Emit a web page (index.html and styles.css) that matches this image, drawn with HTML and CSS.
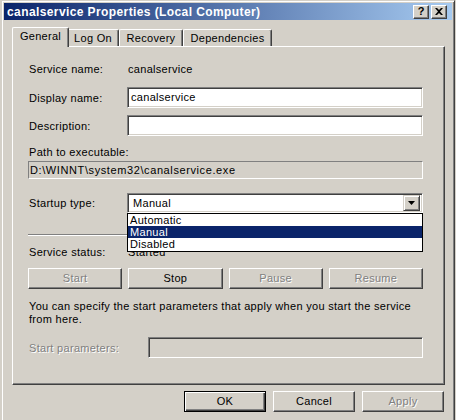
FILE: index.html
```html
<!DOCTYPE html>
<html>
<head>
<meta charset="utf-8">
<link rel="stylesheet" href="styles.css">
</head>
<body>
<div class="window">
  <div class="titlebar">
    <span class="title">canalservice Properties (Local Computer)</span>
    <span class="tbtn help">?</span>
    <span class="tbtn close"><svg width="8" height="7" viewBox="0 0 8 7"><path d="M0 0h2l2 2 2-2h2v0L5 3.5 8 7H6L4 5 2 7H0l3-3.5z" fill="#000"/></svg></span>
  </div>
  <div class="client">
    <div class="tabs">
      <div class="tab active t-general">General</div>
      <div class="tab t-logon">Log On</div>
      <div class="tab t-recovery">Recovery</div>
      <div class="tab t-deps">Dependencies</div>
    </div>
    <div class="panel">
      <div class="row r-name"><span class="label">Service name:</span><span class="value">canalservice</span></div>
      <div class="row r-display"><span class="label">Display name:</span><div class="edit">canalservice</div></div>
      <div class="row r-desc"><span class="label">Description:</span><div class="edit"></div></div>
      <div class="path-label">Path to executable:</div>
      <div class="path">D:\WINNT\system32\canalservice.exe</div>
      <div class="row r-startup"><span class="label">Startup type:</span>
        <div class="combo">
          <span class="combo-text">Manual</span>
          <span class="combo-btn"><svg width="7" height="4" viewBox="0 0 7 4"><path d="M0 0h7L3.5 4z" fill="#000"/></svg></span>
          <ul class="droplist">
            <li>Automatic</li>
            <li class="sel">Manual</li>
            <li>Disabled</li>
          </ul>
        </div>
      </div>
      <div class="sep"></div>
      <div class="row r-status"><span class="label">Service status:</span><span class="value">Started</span></div>
      <div class="svc-buttons">
        <button class="btn disabled">Start</button>
        <button class="btn">Stop</button>
        <button class="btn disabled">Pause</button>
        <button class="btn disabled">Resume</button>
      </div>
      <p class="hint">You can specify the start parameters that apply when you start the service<br>from here.</p>
      <div class="row r-params"><span class="label params-label disabled">Start parameters:</span><div class="edit edit-disabled"></div></div>
    </div>
    <div class="footer">
      <button class="btn default">OK</button>
      <button class="btn">Cancel</button>
      <button class="btn disabled">Apply</button>
    </div>
  </div>
</div>
</body>
</html>
```

FILE: styles.css
```css
* { box-sizing: border-box; }
html, body {
  margin: 0;
  padding: 0;
  width: 456px;
  height: 420px;
  overflow: hidden;
  background: #d4d0c8;
  font-family: "Liberation Sans", Arial, sans-serif;
  font-size: 11px;
  letter-spacing: 0.3px;
  color: #000;
}
.window {
  margin-left: 1px;
  width: 454px;
  height: 440px;
  border: 1px solid;
  border-color: #d4d0c8 #404040 #404040 #d4d0c8;
  box-shadow: inset 1px 1px #fff, inset -1px -1px #808080;
  padding: 2px;
  background: #d4d0c8;
}
.titlebar {
  height: 17px;
  background: linear-gradient(to right, #0a246a, #a6caf0);
  display: flex;
  align-items: center;
  padding: 0 5px 0 3px;
  gap: 2px;
}
.title {
  flex: 1;
  color: #fff;
  font-weight: bold;
  font-size: 12px;
  white-space: nowrap;
  letter-spacing: 0.4px;
}
.tbtn {
  width: 16px;
  height: 14px;
  background: #d4d0c8;
  border: 1px solid;
  border-color: #fff #404040 #404040 #fff;
  box-shadow: inset -1px -1px #808080;
  display: flex;
  align-items: center;
  justify-content: center;
  font-weight: bold;
  font-size: 11px;
  line-height: 1;
  letter-spacing: 0;
}
.tbtn svg { display: block; }
.client {
  padding: 7px 7px 0 8px;
}
.tabs {
  display: flex;
  align-items: flex-end;
  height: 19px;
  padding-left: 2px;
}
.tab {
  height: 17px;
  border-top: 1px solid #fff;
  border-left: 1px solid #fff;
  border-right: 1px solid #404040;
  box-shadow: inset -1px 0 #808080;
  border-radius: 2px 2px 0 0;
  padding-top: 2px;
  line-height: 13px;
  text-align: center;
  white-space: nowrap;
  background: #d4d0c8;
}
.t-general { width: 57px; }
.t-logon { width: 52px; }
.t-recovery { width: 64px; }
.t-deps { width: 89px; }
.tab.active {
  height: 20px;
  margin: 0 -2px -1px -2px;
  position: relative;
  z-index: 1;
}
.panel {
  height: 339px;
  border: 1px solid;
  border-color: #fff #404040 #404040 #fff;
  box-shadow: inset -1px -1px #808080;
  padding: 16px 21px 0 15px;
}
.row {
  display: flex;
  align-items: center;
}
.label {
  width: 99px;
  flex: none;
  padding-left: 1px;
  white-space: nowrap;
}
.value { padding-left: 1px; }
.r-name { height: 13px; line-height: 13px; }
.r-display { margin-top: 11px; height: 21px; }
.r-desc { margin-top: 7px; height: 21px; }
.edit {
  flex: 1;
  height: 21px;
  background: #fff;
  border: 1px solid;
  border-color: #808080 #fff #fff #808080;
  box-shadow: inset 1px 1px #404040, inset -1px -1px #d4d0c8;
  padding: 0 3px;
  line-height: 17px;
  padding-top: 1px;
  white-space: nowrap;
}
.edit-disabled { background: #d4d0c8; }
.path-label {
  margin-top: 10px;
  height: 13px;
  line-height: 13px;
  padding-left: 1px;
}
.path {
  margin-top: 2px;
  height: 18px;
  border: 1px solid;
  border-color: #808080 #fff #fff #808080;
  padding-left: 1px;
  line-height: 16px;
  letter-spacing: 0.6px;
  white-space: nowrap;
}
.r-startup { margin-top: 14px; height: 20px; }
.combo {
  flex: 1;
  height: 20px;
  position: relative;
  background: #fff;
  border: 1px solid;
  border-color: #808080 #fff #fff #808080;
  box-shadow: inset 1px 1px #404040, inset -1px -1px #d4d0c8;
  display: flex;
  align-items: center;
  padding: 2px 2px 2px 5px;
}
.combo-text { flex: 1; line-height: 14px; }
.combo-btn {
  width: 17px;
  height: 16px;
  background: #d4d0c8;
  border: 1px solid;
  border-color: #d4d0c8 #404040 #404040 #d4d0c8;
  box-shadow: inset 1px 1px #fff, inset -1px -1px #808080;
  display: flex;
  align-items: center;
  justify-content: center;
}
.combo-btn svg { display: block; }
.droplist {
  position: absolute;
  top: 19px;
  left: -1px;
  right: -1px;
  margin: 0;
  padding: 0 0 1px 0;
  list-style: none;
  background: #fff;
  border: 1px solid #000;
  z-index: 5;
}
.droplist li {
  height: 12px;
  line-height: 12px;
  padding-left: 2px;
  white-space: nowrap;
}
.droplist li.sel {
  background: #0a246a;
  color: #fff;
}
.sep {
  margin-top: 21px;
  height: 2px;
  border-top: 1px solid #808080;
  border-bottom: 1px solid #fff;
}
.r-status { margin-top: 10px; height: 13px; line-height: 13px; }
.svc-buttons {
  margin-top: 9px;
  display: grid;
  grid-template-columns: repeat(4, 1fr);
  gap: 6px;
}
.btn {
  margin: 0;
  padding: 0;
  font: inherit;
  letter-spacing: inherit;
  color: #000;
  height: 21px;
  background: #d4d0c8;
  border: 1px solid;
  border-color: #fff #404040 #404040 #fff;
  box-shadow: inset -1px -1px #808080;
  text-align: center;
  line-height: 17px;
}
.disabled {
  color: #808080;
  text-shadow: 1px 1px #fff;
}
.hint {
  margin: 11px 0 0 0;
  line-height: 13px;
  padding-left: 1px;
  white-space: nowrap;
}
.r-params { margin-top: 11px; height: 21px; }
.params-label { width: 120px; }
.footer {
  margin-top: 6px;
  margin-right: 1px;
  display: flex;
  justify-content: flex-end;
  gap: 7px;
}
.footer .btn { width: 82px; }
.btn.default {
  border: 1px solid #000;
  box-shadow: inset 1px 1px #fff, inset -1px -1px #404040, inset -2px -2px #808080;
}
```
